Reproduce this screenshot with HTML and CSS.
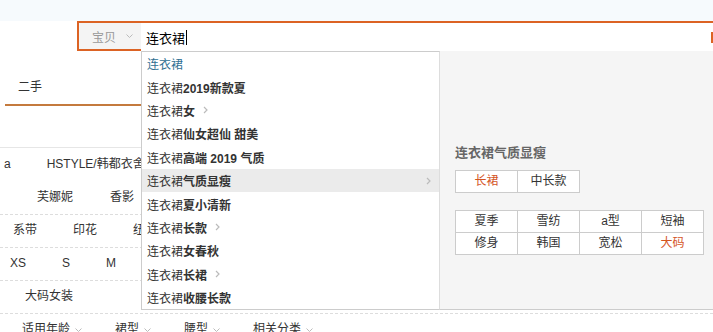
FILE: index.html
```html
<!DOCTYPE html>
<html lang="zh-CN">
<head>
    <meta charset="UTF-8">
    <meta name="viewport" content="width=device-width, initial-scale=1.0">
    <title>连衣裙 - 搜索</title>
    <link rel="stylesheet" href="styles.css">
</head>
<body>

<div class="topbar"></div>

<div class="search-row">
    <div class="search-box">
        <div class="scope">
            <span>宝贝</span>
            <svg class="caret" width="7" height="4" viewBox="0 0 7 4"><path d="M0.5 0.5L3.5 3.5L6.5 0.5" fill="none" stroke="#bbb" stroke-width="1"/></svg>
        </div>
        <div class="query">连衣裙<span class="cursor"></span></div>
        <span class="btn-edge"></span>

        <div class="suggest">
            <ul class="suggest-list">
                <li class="typed">连衣裙</li>
                <li>连衣裙<b>2019新款夏</b></li>
                <li>连衣裙<b>女</b><svg class="more" width="5" height="8" viewBox="0 0 5 8"><path d="M1 1L4 4L1 7" fill="none" stroke="#bbb" stroke-width="1.2"/></svg></li>
                <li>连衣裙<b>仙女超仙 甜美</b></li>
                <li>连衣裙<b>高端 2019 气质</b></li>
                <li class="active">连衣裙<b>气质显瘦</b><svg class="more" width="5" height="8" viewBox="0 0 5 8"><path d="M1 1L4 4L1 7" fill="none" stroke="#bbb" stroke-width="1.2"/></svg></li>
                <li>连衣裙<b>夏小清新</b></li>
                <li>连衣裙<b>长款</b><svg class="more" width="5" height="8" viewBox="0 0 5 8"><path d="M1 1L4 4L1 7" fill="none" stroke="#bbb" stroke-width="1.2"/></svg></li>
                <li>连衣裙<b>女春秋</b></li>
                <li>连衣裙<b>长裙</b><svg class="more" width="5" height="8" viewBox="0 0 5 8"><path d="M1 1L4 4L1 7" fill="none" stroke="#bbb" stroke-width="1.2"/></svg></li>
                <li>连衣裙<b>收腰长款</b></li>
            </ul>
            <div class="suggest-panel">
                <h4>连衣裙气质显瘦</h4>
                <div class="tag-tabs">
                    <a class="on">长裙</a>
                    <a>中长款</a>
                </div>
                <div class="tag-grid">
                    <a>夏季</a>
                    <a>雪纺</a>
                    <a>a型</a>
                    <a>短袖</a>
                    <a>修身</a>
                    <a>韩国</a>
                    <a>宽松</a>
                    <a class="on">大码</a>
                </div>
            </div>
        </div>
    </div>
</div>

<div class="tabs"><span>二手</span></div>

<div class="filters">
    <div class="brand-line first">
        <span>a</span>
        <span>HSTYLE/韩都衣舍</span>
    </div>
    <div class="brand-line second">
        <span>芙娜妮</span>
        <span>香影</span>
    </div>
    <div class="attr-row pattern">
        <span>系带</span>
        <span>印花</span>
        <span>纽扣</span>
    </div>
    <div class="attr-row sizes">
        <span>XS</span>
        <span>S</span>
        <span>M</span>
    </div>
    <div class="attr-row plus">
        <span>大码女装</span>
    </div>
    <div class="attr-row selects">
        <span>适用年龄<svg class="caret" width="7" height="4" viewBox="0 0 7 4"><path d="M0.5 0.5L3.5 3.5L6.5 0.5" fill="none" stroke="#bbb" stroke-width="1"/></svg></span>
        <span>裙型<svg class="caret" width="7" height="4" viewBox="0 0 7 4"><path d="M0.5 0.5L3.5 3.5L6.5 0.5" fill="none" stroke="#bbb" stroke-width="1"/></svg></span>
        <span>腰型<svg class="caret" width="7" height="4" viewBox="0 0 7 4"><path d="M0.5 0.5L3.5 3.5L6.5 0.5" fill="none" stroke="#bbb" stroke-width="1"/></svg></span>
        <span>相关分类<svg class="caret" width="7" height="4" viewBox="0 0 7 4"><path d="M0.5 0.5L3.5 3.5L6.5 0.5" fill="none" stroke="#bbb" stroke-width="1"/></svg></span>
    </div>
</div>

</body>
</html>
```

FILE: styles.css
```css
html, body {
    overflow: hidden;
}

body {
    margin: 0;
    background: #fff;
    color: #333;
    font-family: "Liberation Sans", Arial, "Noto Sans CJK SC", sans-serif;
    font-size: 12px;
}

.topbar {
    height: 21px;
    background-color: #f6fafd;
}

/* search box */

.search-row {
    height: 30px;
}

.search-box {
    position: relative;
    display: flex;
    height: 28px;
    margin-left: 77px;
    border-top: 2px solid #dc6324;
    border-left: 2px solid #dc6324;
}

.scope {
    box-sizing: border-box;
    width: 62px;
    height: 28px;
    padding-left: 13px;
    display: flex;
    align-items: center;
    gap: 10px;
    background-color: #f4f4f4;
    border-bottom: 2px solid #dc6324;
    color: #999;
}

.query {
    flex: 1;
    display: flex;
    align-items: center;
    padding-left: 5px;
    color: #000;
    font-size: 13px;
}

.cursor {
    width: 1px;
    height: 15px;
    margin-left: 1px;
    background-color: #000;
}

.btn-edge {
    align-self: center;
    width: 2px;
    height: 11px;
    background-color: #dc6324;
}

/* suggestions */

.suggest {
    position: absolute;
    top: 28px;
    left: 62px;
    right: 0;
    z-index: 2;
    display: flex;
}

.suggest-list {
    width: 297px;
    margin: 0;
    padding: 0;
    list-style: none;
    background-color: #fff;
    border: 1px solid #ccc;
    border-right-color: #ddd;
}

.suggest-list li {
    height: 23.4px;
    padding-left: 5px;
    padding-right: 8px;
    display: flex;
    align-items: center;
    color: #333;
}

.suggest-list li b {
    font-weight: bold;
}

.suggest-list li.typed {
    color: #2f6f92;
}

.suggest-list li.active {
    background-color: #ebebeb;
}

.suggest-list .more {
    margin-left: 8px;
}

.suggest-list li.active .more {
    margin-left: auto;
}

.suggest-panel {
    flex: 1;
    padding: 93px 0 0 15px;
    background-color: #f5f5f5;
    border-bottom: 1px solid #ccc;
}

.suggest-panel h4 {
    margin: 0 0 8px;
    color: #666;
    font-size: 13px;
    font-weight: bold;
    line-height: 18px;
}

.tag-tabs, .tag-grid {
    display: grid;
    grid-template-columns: repeat(4, 62px);
    width: max-content;
    border-top: 1px solid #ccc;
    border-left: 1px solid #ccc;
}

.tag-tabs {
    grid-template-columns: repeat(2, 62px);
}

.tag-grid {
    margin-top: 17px;
}

.tag-tabs a, .tag-grid a {
    height: 21px;
    line-height: 21px;
    text-align: center;
    background-color: #fff;
    border-right: 1px solid #ccc;
    border-bottom: 1px solid #ccc;
    color: #333;
}

.tag-tabs a.on, .tag-grid a.on {
    color: #d4541f;
}

/* page behind the dropdown */

.tabs {
    height: 27px;
    margin-left: 5px;
    padding: 26px 0 0 13px;
    line-height: 20px;
    border-bottom: 2px solid #c47a3e;
}

.filters {
    margin-top: 41px;
    border-top: 1px solid #e6e6e6;
}

.brand-line {
    display: flex;
    height: 33px;
    line-height: 33px;
    white-space: nowrap;
}

.brand-line.first {
    padding-left: 4px;
    gap: 36px;
}

.brand-line.second {
    padding-left: 37px;
    gap: 37px;
}

.attr-row {
    box-sizing: border-box;
    height: 33px;
    line-height: 30px;
    display: flex;
    gap: 36px;
    white-space: nowrap;
    border-top: 1px dashed #ddd;
}

.attr-row.pattern {
    padding-left: 13px;
}

.attr-row.sizes {
    padding-left: 10px;
}

.attr-row.plus {
    padding-left: 25px;
}

.attr-row.selects {
    padding-left: 22px;
    gap: 33px;
}

.attr-row .caret {
    margin-left: 5px;
    vertical-align: middle;
}
```
